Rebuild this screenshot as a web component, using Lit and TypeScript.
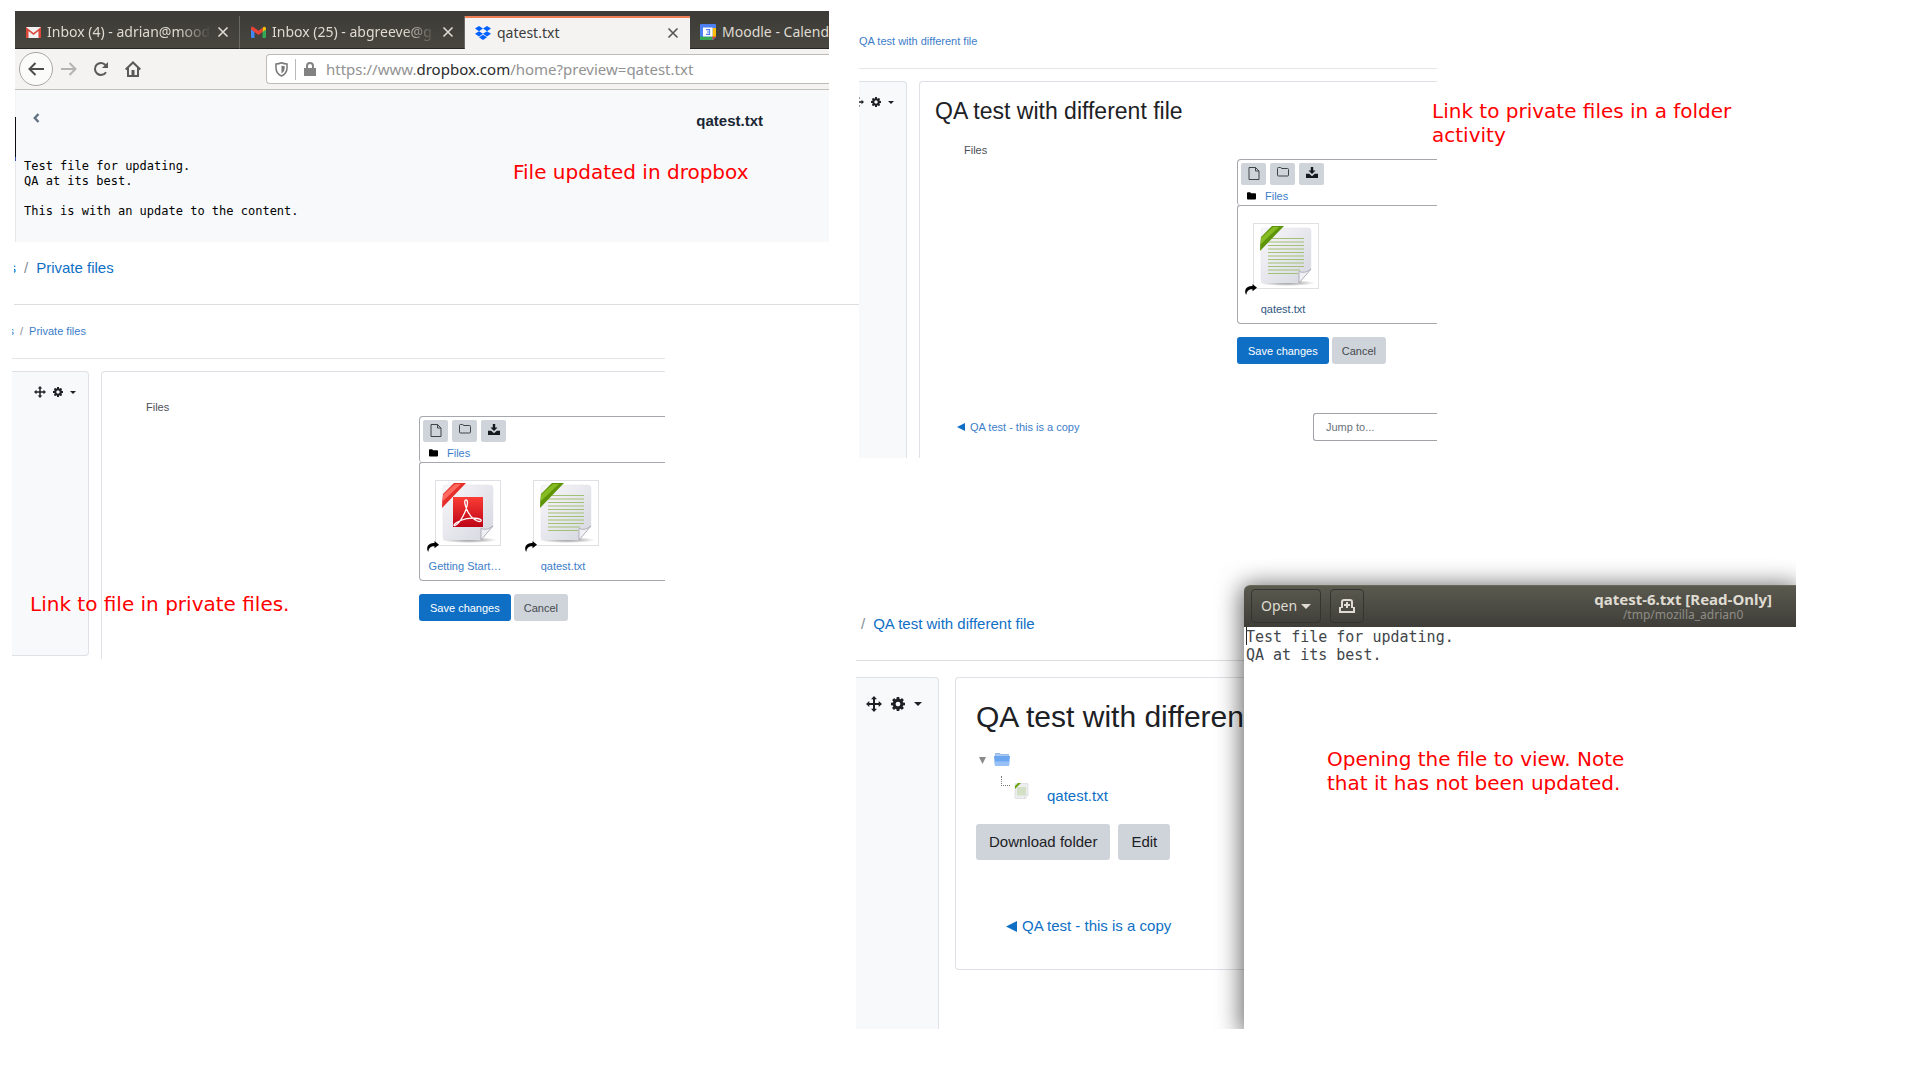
import { LitElement, html, css, svg } from "lit";
import { customElement, property } from "lit/decorators.js";

const shared = css`
  * { box-sizing: border-box; }
  a { color: #0f6fc5; text-decoration: none; }
  button { font: inherit; border: 0; padding: 0; cursor: pointer; }
  svg { display: block; flex: none; }
`;

const COG =
  "M1024 896q0-106-75-181t-181-75-181 75-75 181 75 181 181 75 181-75 75-181zm512-109v222q0 12-8 23t-20 13l-185 28q-19 54-39 91 35 50 107 138 10 12 10 25t-9 23q-27 37-99 108t-94 71q-12 0-26-9l-138-108q-44 23-91 38-16 136-29 186-7 28-36 28h-222q-14 0-24.5-8.5t-11.5-21.5l-28-184q-49-16-90-37l-141 107q-10 9-25 9-14 0-25-11-126-114-165-168-7-10-7-23 0-12 8-23 15-21 51-66.5t54-70.5q-27-50-41-99l-183-27q-13-2-21-12.5t-8-23.5v-222q0-12 8-23t19-13l186-28q14-46 39-92-40-57-107-138-10-12-10-24 0-10 9-23 26-36 98.500-107.500t94.500-71.500q13 0 26 10l138 107q44-23 91-38 16-136 29-186 7-28 36-28h222q14 0 24.500 8.500t11.500 21.500l28 184q49 16 90 37l142-107q9-9 24-9 13 0 25 10 129 119 165 170 7 8 7 22 0 12-8 23-15 21-51 66.500t-54 70.500q26 50 41 98l183 28q13 2 21 12.500t8 23.500z";

const moveIcon = (s: number) => html`<svg width=${s} height=${s} viewBox="0 0 16 16" fill="#1d2125">
  <path d="M8 0l3 3.300H9V7h3.700V5L16 8l-3.300 3V9H9v3.700h2L8 16l-3-3.300h2V9H3.300v2L0 8l3.300-3v2H7V3.300H5z" /></svg>`;
const cogIcon = (s: number) => html`<svg width=${s} height=${s} viewBox="0 128 1536 1536" fill="#1d2125"><path d=${COG} /></svg>`;
const caretIcon = (w: number, color = "#1d2125") => html`<svg width=${w} height=${w / 2} viewBox="0 0 8 4" fill=${color}><path d="M0 0h8L4 4z" /></svg>`;
const backTriangle = (s: number) => html`<svg width=${s} height=${s} viewBox="0 0 10 10" fill="#0f6fc5"><path d="M10 0v10L0 5z" /></svg>`;

const folderSolid = html`<svg width="9" height="8" viewBox="0 0 9 8"><path d="M0 1.200Q0 .3.900.3H3q.8 0 .8.900h4.300q.9 0 .9.900v4.500q0 .9-.9.900H.9q-.9 0-.9-.9z" fill="#000" /></svg>`;
const docOutline = html`<svg width="12" height="13" viewBox="0 0 12 13" fill="none" stroke="#3f4449"><path d="M1 .5h6.500L11 4v8.500H1zM7.500.500V4H11" /></svg>`;
const folderOutline = html`<svg width="12" height="10" viewBox="0 0 12 10" fill="none" stroke="#3f4449"><path d="M.5 1.500q0-1 1-1h2q1 0 1 1h6q1 0 1 1v5.500q0 1-1 1h-9q-1 0-1-1z" /></svg>`;
const downloadIcon = html`<svg width="12" height="11" viewBox="0 0 12 11" fill="#15191d"><path d="M4.800 0h2.400v3.500h2.300L6 7 2.500 3.500h2.300z" /><path d="M0 6.800h3.200L6 9.200l2.800-2.400H12V11H0z" /></svg>`;
const shareArrow = html`<svg width="12" height="11" viewBox="0 0 12 11"><path d="M7.500 0L12 3.700 7.500 7.300V5.200C4 5.100 2 6.400 1.200 11 .2 9.200 0 7.800.3 6.200 1.200 3 4 2 7.500 2z" fill="#000" /></svg>`;

const sheet = (kind: string, size: number) => html`<svg width=${size} height=${size} viewBox="0 0 64 64">
  <defs>
    <linearGradient id="paper" x1="0" y1="0" x2="1" y2="1"><stop offset="0" stop-color="#f7f7fa" /><stop offset="1" stop-color="#d6d6e0" /></linearGradient>
    <linearGradient id="red" x1="0" y1="0" x2="0" y2="1"><stop offset="0" stop-color="#fb3d35" /><stop offset="1" stop-color="#bd0417" /></linearGradient>
    <radialGradient id="shade"><stop offset="0" stop-color="#888" /><stop offset="1" stop-color="#888" stop-opacity="0" /></radialGradient>
  </defs>
  <ellipse cx="33" cy="59" rx="28" ry="3" fill="url(#shade)" />
  <path d="M10 4H54Q57 4 57 7V45L45 59H10Q7 59 7 56V7Q7 4 10 4Z" fill="url(#paper)" stroke="#e2e2e8" stroke-width=".5" />
  <path d="M57 45L45 59V47.500Q51 50 57 45Z" fill="#f0f0f5" stroke="#9a9aa4" stroke-width=".7" />
  ${kind === "pdf"
    ? svg`<path d="M17 16H47V46H17Z" fill="url(#red)" />
        <path d="M30 19C27 19 30 27 32 31C35 37 42 42 45 40C47 37 33 36 26 39C18 42 17 45 19 44.500C24 43 31 29 31.500 22C31.500 20 31 19 30 19Z" fill="none" stroke="#fff" stroke-width="1.300" />
        <path d="M18 2H30L6 27Q6 20 7 13Z" fill="#e62f2b" /><path d="M19 3H25L7 20V14Z" fill="#ff6a60" />`
    : svg`<path d="M14 14.500H50M14 18H50M14 21.500H50M14 25H50M14 28.500H50M14 32H50M14 35.500H50M14 39H50M14 42.500H50M14 46H46M14 49.500H44" fill="none" stroke="#a3c174" stroke-width="1.200" />
        <path d="M18 2H30L6 27Q6 20 7 13Z" fill="#5d9408" /><path d="M19 3H25L7 20V14Z" fill="#86bb22" />`}
</svg>`;

/* Firefox window previewing the Dropbox file */
@customElement("browser-window")
export class BrowserWindow extends LitElement {
  static styles = [shared, css`
    :host { display: block; overflow: hidden; font-family: "Noto Sans", sans-serif; }
    .tabs { display: flex; height: 38px; padding-top: 5px; background: linear-gradient(#3c3b37, #48463f); font-size: 14px; color: #dfdbd2; }
    .tab { flex: none; width: 225px; display: flex; align-items: center; gap: 6px; padding: 0 10px 0 11px; border-right: 1px solid #6b6963; border-bottom: 1px solid #26251f; }
    .tab.active { background: #f4f3f1; color: #3c3c3c; border-top: 2px solid #ef7f56; border-right: 0; border-bottom: 0; padding: 0 11px 2px 10px; }
    .tab.last { border-right: 0; padding-left: 10px; }
    .label { flex: 1; white-space: nowrap; overflow: hidden; line-height: 20px; }
    .fade { -webkit-mask-image: linear-gradient(90deg, #000 80%, transparent); mask-image: linear-gradient(90deg, #000 80%, transparent); }
    .close { width: 12px; height: 12px; background: none; color: inherit; }
    .toolbar { display: flex; align-items: center; height: 41px; padding-left: 4px; background: #f4f3f1; border-bottom: 1px solid #c2beba; }
    .nav { display: grid; place-items: center; width: 32px; height: 34px; background: none; }
    .nav.back { width: 34px; border: 1px solid #a9a7a4; border-radius: 50%; background: #fbfbfa; }
    .url { flex: 1; display: flex; align-items: center; height: 30px; margin-left: 117px; padding-left: 8px; background: #fff; border: 1px solid #bfbbb7; border-right: 0; border-radius: 4px 0 0 4px; }
    .bar { width: 1px; height: 21px; margin: 0 8px 0 7px; background: #b9b9b9; }
    .address { margin-left: 10px; font-size: 15px; line-height: 20px; color: #929292; white-space: nowrap; }
    .address b { font-weight: 400; color: #2b2b2b; }
    .page { min-height: 152px; padding: 18px 66px 18px 9px; background: linear-gradient(#f3f4f6 0 27px, #0c0d12 27px 67px, #3a4fae 67px 71px, #e6e8ec 71px) 0 0 / 1px 100% no-repeat, #f7f9fb; }
    .head { display: flex; justify-content: space-between; align-items: flex-start; }
    .head button { width: 24px; height: 20px; display: grid; place-items: center; background: none; }
    h1 { margin: 3px 0 0; font: 700 15px/20px "Liberation Sans", sans-serif; color: #1b2733; }
    pre { margin: 28px 0 0; font: 12px/15px "DejaVu Sans Mono", monospace; color: #000; }
  `];

  private closeIcon(color: string) {
    return html`<svg width="12" height="12" viewBox="0 0 12 12" stroke=${color} stroke-width="1.600"><path d="M1.500 1.500l9 9M10.500 1.500l-9 9" /></svg>`;
  }

  render() {
    return html`
      <div class="tabs">
        <div class="tab">
          <svg width="15" height="12" viewBox="0 0 15 12"><path d="M0 1h15v11H0z" fill="#f2f2f2" /><path d="M0 12V1l7.500 6L15 1v11h-2.500V5L7.500 9l-5-4v7z" fill="#d9473b" /></svg>
          <span class="label fade">Inbox (4) - adrian@mood</span>
          <button class="close" aria-label="Close tab">${this.closeIcon("#dfdbd2")}</button>
        </div>
        <div class="tab">
          <svg width="15" height="12" viewBox="0 0 15 12"><path d="M0 2v9q0 1 1 1h2.500V5z" fill="#4285f4" /><path d="M11.500 12H14q1 0 1-1V2l-3.500 3z" fill="#34a853" /><path d="M11.500 2v4L15 3.400V2q-1-2-2.500-1z" fill="#fbbc04" /><path d="M0 2q.5-2 2-1.200l5.500 4 4-3V6l-4 3L0 3.400z" fill="#ea4335" /></svg>
          <span class="label fade">Inbox (25) - abgreeve@g</span>
          <button class="close" aria-label="Close tab">${this.closeIcon("#dfdbd2")}</button>
        </div>
        <div class="tab active">
          <svg width="16" height="14" viewBox="0 0 16 14" fill="#0061ff"><path d="M4 0l4 2.600L4 5.200 0 2.600zM12 0l4 2.600-4 2.600-4-2.600zM4 5.200l4 2.600-4 2.600-4-2.600zM12 5.200l4 2.600-4 2.600-4-2.600zM8 8.800l4 2.500L8 14l-4-2.700z" /></svg>
          <span class="label">qatest.txt</span>
          <button class="close" aria-label="Close tab">${this.closeIcon("#555")}</button>
        </div>
        <div class="tab last">
          <svg width="16" height="16" viewBox="0 0 16 16"><path d="M0 1q0-1 1-1h14q1 0 1 1v12l-3 3H1q-1 0-1-1z" fill="#4d7ff0" /><path d="M12.500 4H16v9h-3.500z" fill="#fbbc04" /><path d="M0 12.500h12.500V16H1q-1 0-1-1z" fill="#34a853" /><path d="M12.500 12.500H16L12.500 16z" fill="#ea4335" /><path d="M3 3.500h9.500v9H3z" fill="#fff" /><path d="M6 5.700h3.500v4.600H6M7 8h2.500" fill="none" stroke="#4d7ff0" stroke-width="1.200" /></svg>
          <span class="label">Moodle - Calend</span>
        </div>
      </div>
      <div class="toolbar">
        <button class="nav back" aria-label="Back"><svg width="16" height="14" viewBox="0 0 16 14" fill="none" stroke="#4c4c4c" stroke-width="2"><path d="M7.500 1L1.500 7l6 6M1.500 7H16" /></svg></button>
        <button class="nav" aria-label="Forward"><svg width="16" height="14" viewBox="0 0 16 14" fill="none" stroke="#b4b3b1" stroke-width="2"><path d="M8.500 1l6 6-6 6M14.500 7H0" /></svg></button>
        <button class="nav" aria-label="Reload"><svg width="16" height="16" viewBox="0 0 16 16"><path d="M13 11.200A6 6 0 1 1 12.500 4" fill="none" stroke="#5a5a5a" stroke-width="2" /><path d="M15 1v6H9z" fill="#5a5a5a" /></svg></button>
        <button class="nav" aria-label="Home"><svg width="16" height="16" viewBox="0 0 16 16" fill="none" stroke="#5a5a5a" stroke-width="2"><path d="M.7 8.500L8 1.500l7.300 7M3 7v8h10V7" /><path d="M8 9v5" stroke-width="3" /></svg></button>
        <div class="url">
          <svg width="13" height="15" viewBox="0 0 13 15"><path d="M1 2q3 0 5.500-1.200Q9 2 12 2v4q0 5.500-5.500 8Q1 11.500 1 6z" fill="none" stroke="#777" stroke-width="1.500" /><path d="M6.500 3.500v8Q9.800 9.500 9.800 4.200q-2 0-3.300-.7z" fill="#777" /></svg>
          <span class="bar"></span>
          <svg width="12" height="14" viewBox="0 0 12 14"><path d="M0 6h12v8H0z" fill="#828282" /><path d="M3 7V4q0-3 3-3t3 3v3" fill="none" stroke="#828282" stroke-width="2" /></svg>
          <span class="address">https://www.<b>dropbox.com</b>/home?preview=qatest.txt</span>
        </div>
      </div>
      <div class="page">
        <div class="head">
          <button aria-label="Back to files"><svg width="7" height="10" viewBox="0 0 7 10" fill="none" stroke="#637282" stroke-width="2.400"><path d="M5.500 1L1.800 5l3.700 4" /></svg></button>
          <h1>qatest.txt</h1>
        </div>
        <pre>Test file for updating.
QA at its best.

This is with an update to the content.</pre>
      </div>`;
  }
}

/* Moodle file manager with its form buttons */
@customElement("file-manager")
export class FileManager extends LitElement {
  @property({ attribute: false }) files: { name: string; kind: string; active?: boolean }[] = [];

  static styles = [shared, css`
    :host { display: flex; font: 11px/14px "Liberation Sans", Arial, sans-serif; color: #495057; }
    .name { flex: none; width: 273px; }
    .manager { flex: 1; min-width: 0; margin-top: 16px; white-space: nowrap; }
    .top, .files { border: 1px solid #a5a8ad; border-right: 0; }
    .top { border-bottom: 0; border-radius: 4px 0 0 3px; padding: 3px 3px 0; height: 46px; }
    .tools { display: flex; gap: 4px; margin-bottom: 4px; }
    .tool { display: grid; place-items: start center; padding-top: 4px; width: 25px; height: 22px; background: #ced4da; border-radius: 2px; }
    .path { display: flex; align-items: center; gap: 9px; padding-left: 6px; }
    .files { display: flex; gap: 8px; height: 119px; padding-top: 17px; border-radius: 3px 0 0 4px; }
    .file { position: relative; flex: none; width: 90px; display: flex; flex-direction: column; text-align: center; }
    .thumb { width: 66px; height: 66px; margin: 0 0 13px 15px; border: 1px solid #dee0e3; background: #fff; }
    .link { position: absolute; left: 7px; top: 61px; }
    .path a, .file { color: #3c7dc9; }
    .file.active { color: #2f5682; }
    .actions { display: flex; gap: 3px; margin-top: 13px; }
    .action { height: 27px; padding: 0 10px; border-radius: 3px; background: #ced4da; color: #44494e; }
    .action.primary { padding: 0 11px; background: #0f6fc5; color: #fff; }
  `];

  render() {
    return html`
      <span class="name">Files</span>
      <div class="manager">
        <div class="top">
          <div class="tools">
            <button class="tool" aria-label="Add file">${docOutline}</button>
            <button class="tool" aria-label="Create folder">${folderOutline}</button>
            <button class="tool" aria-label="Download all">${downloadIcon}</button>
          </div>
          <div class="path">${folderSolid}<a href="#">Files</a></div>
        </div>
        <div class="files">
          ${this.files.map((f) => html`
            <a class="file ${f.active ? "active" : ""}" href="#">
              <span class="thumb">${sheet(f.kind, 64)}</span>
              <span class="link">${shareArrow}</span>
              <span>${f.name}</span>
            </a>`)}
        </div>
        <div class="actions">
          <button class="action primary">Save changes</button>
          <button class="action">Cancel</button>
        </div>
      </div>`;
  }
}

/* Text editor window holding the downloaded file */
@customElement("editor-window")
export class EditorWindow extends LitElement {
  static styles = [shared, css`
    :host { display: flex; flex-direction: column; background: #fff; border-radius: 6px 0 0 0; box-shadow: 0 3px 24px 3px rgba(0, 0, 0, 0.6); clip-path: inset(-26px 0 0 -34px); font-family: "Noto Sans", sans-serif; }
    header { display: flex; align-items: center; gap: 9px; height: 42px; padding: 0 24px 0 7px; background: linear-gradient(#5b5a4f, #3e3d38); border-top: 1px solid #6a6a5a; border-radius: 6px 0 0 0; color: #dfdbd2; }
    .btn { display: flex; align-items: center; justify-content: center; gap: 4px; height: 34px; width: 34px; margin-bottom: 1px; background: none; border: 1px solid #35342f; border-radius: 4px; color: inherit; font-size: 14px; }
    .btn.open { width: 70px; }
    .title { margin: 0 0 2px auto; text-align: center; }
    h2 { margin: 0; font-size: 15px; line-height: 18px; font-weight: 700; }
    p { margin: 0; font-size: 12px; line-height: 14px; color: #8f8d85; }
    pre { margin: 0; padding: 1px 2px 0; font: 15px/18px "DejaVu Sans Mono", monospace; color: #42464a; background: linear-gradient(#222, #222) 2px 0 / 1px 18px no-repeat; }
  `];

  render() {
    return html`
      <header>
        <button class="btn open">Open ${caretIcon(10, "#dfdbd2")}</button>
        <button class="btn" aria-label="New document"><svg width="16" height="14" viewBox="0 0 16 14" fill="none" stroke="#dfdbd2" stroke-width="2"><path d="M3 9V3q0-2 2-2h6q2 0 2 2v6M1 8v5h14V8M8 3v6M5 6h6" /></svg></button>
        <div class="title"><h2>qatest-6.txt [Read-Only]</h2><p>/tmp/mozilla_adrian0</p></div>
      </header>
      <pre>Test file for updating.
QA at its best.</pre>`;
  }
}

@customElement("app-root")
export class AppRoot extends LitElement {
  static styles = [shared, css`
    :host { display: block; min-height: 100vh; background: #fff; font: 11px/16px "Liberation Sans", Arial, sans-serif; color: #1d2125; overflow: hidden; }
    .board { display: grid; grid-template-columns: minmax(0, 847fr) minmax(0, 1061fr); padding-left: 12px; }
    .shot { position: relative; }
    .browser { margin: 11px 30px 0 3px; }
    .private { margin-right: 194px; }
    .folder { margin-right: 483px; }
    .view { margin: 136px 124px 0 -3px; }

    .crumbs { display: flex; gap: 6px; border-bottom: 1px solid #e3e5e8; padding: 18px 0 19px; color: #868e96; white-space: nowrap; }
    .crumbs a { color: #3c7dc9; }
    .crumbs.deep { padding-top: 33px; }
    .crumbs.large { gap: 8px; font-size: 15px; line-height: 20px; border-color: #dcdee1; }
    .crumbs.large a { color: #0f6fc5; }
    .crumbs.strip { margin-left: 2px; padding: 16px 0 26px; }
    .view .crumbs { padding: 20px 0 26px 5px; }
    .cut { display: flex; justify-content: flex-end; width: 2px; overflow: hidden; }

    .columns { display: flex; gap: 12px; padding-top: 12px; }
    .side { flex: none; width: 77px; display: flex; justify-content: flex-end; align-items: flex-start; padding: 14px 12px 0 0; background: #f7f9fb; border: 1px solid #dee2e6; border-left: 0; border-radius: 0 4px 0 0; overflow: hidden; }
    .menu { display: flex; align-items: center; gap: 7px; height: 12px; }
    .private .side { margin-bottom: 3px; border-radius: 0 4px 4px 0; }
    .folder .side { width: 48px; border-bottom: 0; }
    .card { flex: 1; min-width: 0; border: 1px solid #dee2e6; border-right: 0; border-radius: 4px 0 0 0; overflow: hidden; }
    .private .card { border-bottom: 0; padding: 28px 0 38px 44px; }
    .folder .card { border-bottom: 0; padding: 15px 0 17px 15px; }
    .folder h2 { margin: 0 0 18px; font: 400 23px/28px "Liberation Sans", Arial, sans-serif; }
    .folder file-manager { padding-left: 29px; }

    .pager { display: flex; align-items: center; justify-content: space-between; margin-top: 49px; padding-left: 22px; }
    .prev { display: flex; align-items: center; gap: 5px; white-space: nowrap; }
    .folder .prev { color: #3c7dc9; }
    .jump { appearance: none; width: 124px; height: 28px; margin: 0; padding: 0 12px; background: #fff; border: 1px solid #a0a4a9; border-right: 0; border-radius: 3px 0 0 3px; font: inherit; color: #6a737b; }

    .view .columns { gap: 16px; padding-top: 16px; }
    .view .side { width: 83px; padding: 18px 16px 0 0; border-bottom: 0; }
    .view .menu { gap: 9px; height: 16px; }
    .view .card { margin-bottom: 59px; padding: 21px 0 33px 20px; border-radius: 4px 0 0 4px; font-size: 15px; line-height: 20px; }
    .view h2 { margin: 0 0 15px; font: 400 30px/36px "Liberation Sans", Arial, sans-serif; white-space: nowrap; }
    .root { display: flex; align-items: center; gap: 8px; height: 20px; padding-left: 3px; }
    .leaf { display: flex; align-items: center; height: 30px; margin-top: 6px; padding-left: 25px; }
    .branch { align-self: flex-start; width: 9px; height: 10px; margin-right: 4px; border: 1px dotted #777; border-width: 0 0 1px 1px; }
    .leaf a { align-self: flex-end; margin-left: 18px; }
    .buttons { display: flex; gap: 8px; margin-top: 18px; }
    .buttons button { height: 36px; padding: 0 13px; border-radius: 3px; background: #ced4da; color: #1d2125; }
    .view .prev { margin: 56px 0 0 30px; }

    .editor { position: absolute; left: 388px; right: 0; top: -9px; bottom: 0; }
    .note { position: absolute; margin: 0; width: 310px; font: 20px/24px "DejaVu Sans", sans-serif; color: #f00; }
    .note.dropbox { left: 498px; top: 149px; }
    .note.linked { left: 18px; top: 287px; }
    .note.activity { left: 573px; top: 99px; }
    .note.stale { left: 471px; top: 153px; }
  `];

  private menu(size: number, caret: number) {
    return html`<div class="menu">${moveIcon(size)}${cogIcon(size - 2)}${caretIcon(caret)}</div>`;
  }

  render() {
    return html`
      <main class="board">
        <div>
          <section class="shot browser">
            <browser-window></browser-window>
            <p class="note dropbox">File updated in dropbox</p>
          </section>
          <nav class="crumbs large strip"><a class="cut" href="#">s</a><span>/</span><a href="#">Private files</a></nav>
          <section class="shot private">
            <nav class="crumbs"><a class="cut" href="#">s</a><span>/</span><a href="#">Private files</a></nav>
            <div class="columns">
              <aside class="side">${this.menu(12, 6)}</aside>
              <div class="card">
                <file-manager .files=${[{ name: "Getting Start…", kind: "pdf" }, { name: "qatest.txt", kind: "txt" }]}></file-manager>
              </div>
            </div>
            <p class="note linked">Link to file in private files.</p>
          </section>
        </div>
        <div>
          <section class="shot folder">
            <nav class="crumbs deep"><a href="#">QA test with different file</a></nav>
            <div class="columns">
              <aside class="side">${this.menu(12, 6)}</aside>
              <div class="card">
                <h2>QA test with different file</h2>
                <file-manager .files=${[{ name: "qatest.txt", kind: "txt", active: true }]}></file-manager>
                <div class="pager">
                  <a class="prev" href="#">${backTriangle(8)}QA test - this is a copy</a>
                  <select class="jump" aria-label="Jump to activity"><option>Jump to...</option></select>
                </div>
              </div>
            </div>
            <p class="note activity">Link to private files in a folder activity</p>
          </section>
          <section class="shot view">
            <nav class="crumbs large"><span>/</span><a href="#">QA test with different file</a></nav>
            <div class="columns">
              <aside class="side">${this.menu(16, 8)}</aside>
              <div class="card">
                <h2>QA test with differen</h2>
                <div class="root">
                  <svg width="7" height="7" viewBox="0 0 7 7"><path d="M0 0h7L3.500 7z" fill="#8a8a8a" /></svg>
                  <svg width="16" height="14" viewBox="0 0 16 14"><path d="M1.500.500h4.500l1 1h7.500V5h-13z" fill="#a9c9f0" stroke="#6d9edb" stroke-width=".6" /><path d="M0 3h16l-1 10H1z" fill="#6ca5f0" /><path d="M.6 8.500h14.800L15 13H1z" fill="#98c2f7" /></svg>
                </div>
                <div class="leaf"><span class="branch"></span>
                  <svg width="15" height="16" viewBox="0 0 15 16"><path d="M2 .5h11q1 0 1 1V12l-3 3.500H2q-1 0-1-1v-13q0-1 1-1z" fill="#eceef0" stroke="#d3d5d9" stroke-width=".6" /><path d="M3 4h9v7l-1.500 1.500H3z" fill="#d3e0c6" /><path d="M1 6V3l3-3h3z" fill="#6aa312" /><path d="M11 15.500V12h3z" fill="#fff" stroke="#c4c6ca" stroke-width=".5" /></svg>
                  <a href="#">qatest.txt</a>
                </div>
                <div class="buttons"><button>Download folder</button><button>Edit</button></div>
                <a class="prev" href="#">${backTriangle(11)}QA test - this is a copy</a>
              </div>
            </div>
            <editor-window class="editor"></editor-window>
            <p class="note stale">Opening the file to view. Note that it has not been updated.</p>
          </section>
        </div>
      </main>`;
  }
}
